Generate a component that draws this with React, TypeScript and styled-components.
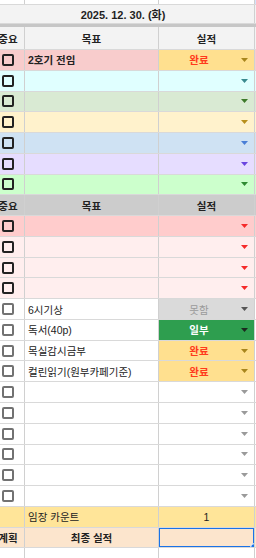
import styled, { createGlobalStyle } from 'styled-components';

const GlobalStyle = createGlobalStyle`
  html, body {
    margin: 0;
    padding: 0;
    background: #fff;
    overflow: hidden;
  }
  body {
    font-family: "Liberation Sans", "Noto Sans CJK KR", Arial, sans-serif;
    font-size: 10.5px;
    color: #222;
  }
`;

type Result = 'done' | 'partial' | 'fail';

type RowData = {
  bg: string;
  box: string;
  arrow: string;
  goal?: string;
  bold?: boolean;
  result?: Result;
};

const ROW_H = '20.77px';

const Sheet = styled.div`
  display: flex;
  flex-direction: column;
  width: 268px;
  margin-left: -8px;
`;

const Row = styled.div<{ $bg?: string; $h?: string }>`
  display: grid;
  grid-template-columns: 33px 134px 96px 5px;
  height: ${p => p.$h ?? ROW_H};
  box-sizing: border-box;
  background: ${p => p.$bg ?? '#fff'};
  border-bottom: 1px solid #d9d9d9;
`;

const Cell = styled.div<{ $left?: boolean; $bold?: boolean; $bg?: string; $span?: number }>`
  display: flex;
  align-items: center;
  justify-content: ${p => (p.$left ? 'flex-start' : 'center')};
  padding-left: ${p => (p.$left ? '3px' : '0')};
  grid-column: ${p => (p.$span ? `span ${p.$span}` : 'auto')};
  min-width: 0;
  overflow: hidden;
  white-space: nowrap;
  position: relative;
  border-right: 1px solid #d0d0d0;
  background: ${p => p.$bg ?? 'transparent'};
  font-weight: ${p => (p.$bold ? 700 : 400)};
`;

const DateCell = styled(Cell)`
  font-size: 11px;
  font-weight: 700;
  color: #1f1f1f;
`;

const Divider = styled.div`
  height: 3px;
  background: #c6c6c6;
`;

const Box = styled.span<{ $c: string }>`
  width: 12px;
  height: 12px;
  box-sizing: border-box;
  border: 2px solid ${p => p.$c};
  border-radius: 2px;
  margin-left: -1px;
`;

const Label = styled.span<{ $color: string; $bold?: boolean }>`
  flex: 1;
  text-align: center;
  padding-right: 2px;
  color: ${p => p.$color};
  font-weight: ${p => (p.$bold ? 700 : 400)};
`;

const ArrowWrap = styled.span`
  display: flex;
  margin-left: auto;
  margin-right: 6px;
`;

const Selection = styled.div`
  position: absolute;
  top: -1px;
  left: -1px;
  right: -1px;
  bottom: -1px;
  border: 2px solid #1a73e8;
`;

const Handle = styled.div`
  position: absolute;
  right: -5px;
  bottom: -5px;
  width: 7px;
  height: 7px;
  border-radius: 50%;
  background: #1a73e8;
  border: 1px solid #fff;
  z-index: 2;
`;

const RESULT_STYLE: Record<Result, { bg: string; text: string; label: string; arrow: string; bold: boolean }> = {
  done: { bg: '#ffe08f', text: '#ff3a1c', label: '완료', arrow: '#a8861d', bold: true },
  partial: { bg: '#2e9e4f', text: '#ffffff', label: '일부', arrow: '#1b2a1f', bold: true },
  fail: { bg: '#dadada', text: '#9b9b9b', label: '못함', arrow: '#555555', bold: false },
};

function Arrow({ color }: { color: string }) {
  return (
    <ArrowWrap>
      <svg width="7" height="4" viewBox="0 0 7 4">
        <polygon points="0,0 7,0 3.5,4" fill={color} />
      </svg>
    </ArrowWrap>
  );
}

function ResultCell({ result, arrow }: { result?: Result; arrow: string }) {
  if (!result) {
    return (
      <Cell>
        <Arrow color={arrow} />
      </Cell>
    );
  }
  const s = RESULT_STYLE[result];
  return (
    <Cell $bg={s.bg}>
      <Label $color={s.text} $bold={s.bold}>{s.label}</Label>
      <Arrow color={s.arrow} />
    </Cell>
  );
}

function GoalRow({ row }: { row: RowData }) {
  return (
    <Row $bg={row.bg}>
      <Cell>
        <Box $c={row.box} />
      </Cell>
      <Cell $left $bold={row.bold}>{row.goal}</Cell>
      <ResultCell result={row.result} arrow={row.arrow} />
      <Cell />
    </Row>
  );
}

function HeaderRow({ bg }: { bg: string }) {
  return (
    <Row $bg={bg}>
      <Cell $bold>중요</Cell>
      <Cell $bold>목표</Cell>
      <Cell $bold>실적</Cell>
      <Cell />
    </Row>
  );
}

const dark = '#222';
const grey = '#727272';
const red = '#f52a2a';

const topRows: RowData[] = [
  { bg: '#f8cccc', box: dark, arrow: '', goal: '2호기 전임', bold: true, result: 'done' },
  { bg: '#e0ffff', box: dark, arrow: '#3a8a8f' },
  { bg: '#d9ead3', box: dark, arrow: '#3d7a2a' },
  { bg: '#fff2cc', box: dark, arrow: '#b8901c' },
  { bg: '#cfe2f3', box: dark, arrow: '#4a7fd6' },
  { bg: '#e6ddff', box: dark, arrow: '#6a45e0' },
  { bg: '#ccffcc', box: dark, arrow: '#2f8a32' },
];

const bottomRows: RowData[] = [
  { bg: '#ffcccc', box: dark, arrow: red },
  { bg: '#ffeeee', box: dark, arrow: red },
  { bg: '#ffeeee', box: dark, arrow: red },
  { bg: '#ffeeee', box: dark, arrow: red },
  { bg: '#fff', box: grey, arrow: '', goal: '6시기상', result: 'fail' },
  { bg: '#fff', box: grey, arrow: '', goal: '독서(40p)', result: 'partial' },
  { bg: '#fff', box: grey, arrow: '', goal: '목실감시금부', result: 'done' },
  { bg: '#fff', box: grey, arrow: '', goal: '컬린읽기(원부카페기준)', result: 'done' },
  ...Array.from({ length: 6 }, () => ({ bg: '#fff', box: grey, arrow: '#9a9a9a' })),
];

export default function App() {
  return (
    <>
      <GlobalStyle />
      <Sheet>
        <Row $h="5px">
          <Cell />
          <Cell />
          <Cell />
          <Cell $bg="#d3e3fd" />
        </Row>
        <Row $bg="#f3f3f3" $h="19px">
          <DateCell $span={3}>2025. 12. 30. (화)</DateCell>
          <Cell />
        </Row>
        <Divider />
        <Row $bg="#f3f3f3" $h="23px">
          <Cell $bold>중요</Cell>
          <Cell $bold>목표</Cell>
          <Cell $bold>실적</Cell>
          <Cell />
        </Row>
        {topRows.map((r, i) => (
          <GoalRow key={`t${i}`} row={r} />
        ))}
        <HeaderRow bg="#cccccc" />
        {bottomRows.map((r, i) => (
          <GoalRow key={`b${i}`} row={r} />
        ))}
        <Row $bg="#ffe599">
          <Cell />
          <Cell $left>임장 카운트</Cell>
          <Cell>1</Cell>
          <Cell />
        </Row>
        <Row $bg="#fce5cd">
          <Cell $bold>계획</Cell>
          <Cell $bold>최종 실적</Cell>
          <Cell>
            <Selection />
            <Handle />
          </Cell>
          <Cell />
        </Row>
        <Row>
          <Cell />
          <Cell />
          <Cell />
          <Cell />
        </Row>
      </Sheet>
    </>
  );
}
